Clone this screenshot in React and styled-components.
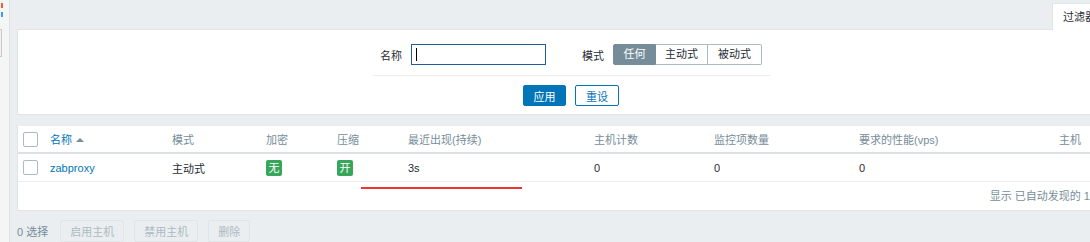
import React from "react";
import styled, { createGlobalStyle, css } from "styled-components";

const GlobalStyle = createGlobalStyle`
  html, body {
    margin: 0;
    padding: 0;
    overflow: hidden;
    background: #ebeef0;
  }
  body {
    font-family: "Liberation Sans", Arial, "Noto Sans CJK SC", sans-serif;
    font-size: 11px;
    color: #1f2c33;
  }
`;

const Page = styled.div`
  display: flex;
  height: 242px;
  width: 1140px;
`;

const Sidebar = styled.div`
  width: 9px;
  flex: none;
  background: #f4f5f5;
  border-right: 1px solid #dfe2e4;
  display: flex;
  flex-direction: column;
`;

const LogoBit = styled.div`
  margin: 3px 0 0 1px;
  width: 2px;
  height: 5px;
  background: ${(p) => p.color};
  ${(p) =>
    p.second &&
    css`
      margin-top: 4px;
    `}
`;

const SideButton = styled.div`
  margin-top: 12px;
  width: 1px;
  height: 26px;
  border: 1px solid #c9ccce;
  border-left: none;
  background: #f0f0f0;
`;

const Main = styled.div`
  padding-left: 7px;
  width: 1108px;
  flex: none;
  display: flex;
  flex-direction: column;
`;

const TabBar = styled.div`
  height: 29px;
  display: flex;
  justify-content: flex-end;
  align-items: flex-end;
  padding-right: 18px;
`;

const Tab = styled.div`
  height: 26px;
  line-height: 26px;
  padding: 0 10px;
  background: #fff;
  border: 1px solid #dfe4e7;
  border-bottom: none;
  margin-bottom: -1px;
  position: relative;
  z-index: 1;
  color: #1f2c33;
  white-space: nowrap;
`;

const FilterBox = styled.div`
  background: #fff;
  border: 1px solid #dfe4e7;
  height: 84px;
  display: flex;
  flex-direction: column;
  align-items: center;
`;

const FormRow = styled.div`
  margin-top: 14px;
  width: 398px;
  padding-bottom: 10px;
  border-bottom: 1px solid #ebeef0;
  display: flex;
  align-items: center;
  white-space: nowrap;
  & > * {
    flex: none;
  }
`;

const Label = styled.label`
  color: #1f2c33;
  margin-right: 9px;
  margin-left: ${(p) => p.offset || 0}px;
`;

const TextInput = styled.div`
  width: 129px;
  height: 17px;
  border: 1px solid #1e5f99;
  background: #fff;
  padding: 1px 0 1px 4px;
  display: flex;
  align-items: center;
`;

const Caret = styled.span`
  width: 1px;
  height: 13px;
  background: #000;
`;

const RadioGroup = styled.div`
  display: flex;
  height: 21px;
`;

const Radio = styled.div`
  height: 19px;
  line-height: 19px;
  width: ${(p) => p.w}px;
  text-align: center;
  border: 1px solid ${(p) => (p.active ? "#768d99" : "#acbbc2")};
  border-left-width: ${(p) => (p.first ? 1 : 0)}px;
  background: ${(p) => (p.active ? "#768d99" : "#fff")};
  color: ${(p) => (p.active ? "#fff" : "#1f2c33")};
  ${(p) =>
    p.first &&
    css`
      border-radius: 2px 0 0 2px;
    `}
  ${(p) =>
    p.last &&
    css`
      border-radius: 0 2px 2px 0;
    `}
`;

const ButtonRow = styled.div`
  margin-top: 9px;
  display: flex;
  gap: 9px;
`;

const Button = styled.button`
  font: inherit;
  height: 21px;
  width: ${(p) => p.w}px;
  padding: 0;
  border-radius: 2px;
  cursor: pointer;
  border: 1px solid #0275b8;
  background: ${(p) => (p.alt ? "#fff" : "#0275b8")};
  color: ${(p) => (p.alt ? "#0275b8" : "#fff")};
`;

const TableBox = styled.div`
  margin-top: 10px;
  background: #fff;
  border: 1px solid #dfe4e7;
  border-top-color: #ebeef0;
  position: relative;
`;

const Table = styled.table`
  width: 100%;
  border-collapse: collapse;
  table-layout: fixed;
`;

const Th = styled.th`
  text-align: left;
  font-weight: normal;
  color: #768d99;
  height: 26px;
  padding: 0 5px;
  border-bottom: 2px solid #dbe0e3;
  white-space: nowrap;
  ${(p) =>
    p.sorted &&
    css`
      color: #0275b8;
    `}
`;

const Td = styled.td`
  height: 27px;
  padding: 0 5px;
  border-bottom: 1px solid #ebeef0;
  white-space: nowrap;
  color: #1f2c33;
`;

const Checkbox = styled.span`
  display: block;
  width: 13px;
  height: 13px;
  border: 1px solid #acbbc2;
  border-radius: 2px;
  background: #fff;
`;

const Link = styled.a`
  color: #0275b8;
  text-decoration: none;
`;

const SortArrow = styled.span`
  display: inline-block;
  margin-left: 4px;
  vertical-align: 2px;
  border-left: 4px solid transparent;
  border-right: 4px solid transparent;
  border-bottom: 4px solid #768d99;
`;

const Tag = styled.span`
  display: inline-block;
  width: 16px;
  height: 16px;
  line-height: 16px;
  text-align: center;
  border-radius: 2px;
  background: #37a55a;
  color: #fff;
`;

const Footer = styled.div`
  height: 28px;
  line-height: 28px;
  display: flex;
  justify-content: flex-end;
  padding-right: 6px;
  color: #768d99;
  white-space: nowrap;
`;

const Annotation = styled.div`
  position: absolute;
  left: 343px;
  top: 61px;
  width: 161px;
  height: 2px;
  background: #f03434;
`;

const ActionBar = styled.div`
  margin-top: 9px;
  display: flex;
  align-items: center;
  gap: 10px;
  white-space: nowrap;
`;

const Selected = styled.span`
  color: #768d99;
  margin-right: 2px;
`;

const DisabledButton = styled.button`
  font: inherit;
  height: 22px;
  width: ${(p) => p.w}px;
  padding: 0;
  border: 1px solid #dfe4e7;
  border-radius: 2px;
  background: #ebeef0;
  color: #acbbc2;
`;

const columns = [27, 122, 94, 71, 71, 186, 120, 145, 200, 72];

export default function App() {
  return (
    <>
      <GlobalStyle />
      <Page>
        <Sidebar>
          <LogoBit color="#f25a3c" />
          <LogoBit color="#3d9ce8" second />
          <SideButton />
        </Sidebar>
        <Main>
          <TabBar>
            <Tab>过滤器</Tab>
          </TabBar>
          <FilterBox>
            <FormRow>
              <Label offset={8}>名称</Label>
              <TextInput>
                <Caret />
              </TextInput>
              <Label offset={36}>模式</Label>
              <RadioGroup>
                <Radio active first w={41}>任何</Radio>
                <Radio w={51}>主动式</Radio>
                <Radio last w={53}>被动式</Radio>
              </RadioGroup>
            </FormRow>
            <ButtonRow>
              <Button w={43}>应用</Button>
              <Button alt w={44}>重设</Button>
            </ButtonRow>
          </FilterBox>
          <TableBox>
            <Table>
              <colgroup>
                {columns.map((w, i) => (
                  <col key={i} style={{ width: w }} />
                ))}
              </colgroup>
              <thead>
                <tr>
                  <Th><Checkbox /></Th>
                  <Th sorted>名称<SortArrow /></Th>
                  <Th>模式</Th>
                  <Th>加密</Th>
                  <Th>压缩</Th>
                  <Th>最近出现(持续)</Th>
                  <Th>主机计数</Th>
                  <Th>监控项数量</Th>
                  <Th>要求的性能(vps)</Th>
                  <Th>主机</Th>
                </tr>
              </thead>
              <tbody>
                <tr>
                  <Td><Checkbox /></Td>
                  <Td><Link href="#">zabproxy</Link></Td>
                  <Td>主动式</Td>
                  <Td><Tag>无</Tag></Td>
                  <Td><Tag>开</Tag></Td>
                  <Td>3s</Td>
                  <Td>0</Td>
                  <Td>0</Td>
                  <Td>0</Td>
                  <Td></Td>
                </tr>
              </tbody>
            </Table>
            <Footer>显示 已自动发现的 1中的1</Footer>
            <Annotation />
          </TableBox>
          <ActionBar>
            <Selected>0 选择</Selected>
            <DisabledButton w={64}>启用主机</DisabledButton>
            <DisabledButton w={64}>禁用主机</DisabledButton>
            <DisabledButton w={42}>删除</DisabledButton>
          </ActionBar>
        </Main>
      </Page>
    </>
  );
}
